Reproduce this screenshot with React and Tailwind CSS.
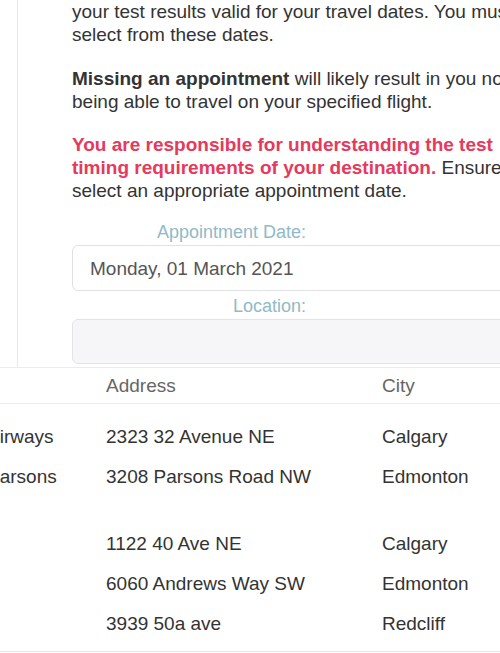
const rows = [
  { name: "Airways", address: "2323 32 Avenue NE", city: "Calgary" },
  { name: "Parsons", address: "3208 Parsons Road NW", city: "Edmonton" },
  null,
  { name: "", address: "1122 40 Ave NE", city: "Calgary" },
  { name: "", address: "6060 Andrews Way SW", city: "Edmonton" },
  { name: "", address: "3939 50a ave", city: "Redcliff" },
];

const Line = ({ children }) => (
  <div className="whitespace-nowrap">{children}</div>
);

const App = () => {
  return (
    <div className="w-[500px] h-[653px] overflow-hidden bg-white font-['Liberation_Sans',Arial,sans-serif] text-[#333]">
      <div className="ml-[17px] w-[600px] h-[367px] border-l border-[#e8e8e8] pl-[54px] text-[19px] leading-[23px]">
        <div>
          <Line>your test results valid for your travel dates. You must</Line>
          <Line>select from these dates.</Line>
        </div>
        <div className="mt-[21px]">
          <Line>
            <span className="font-bold">Missing an appointment</span> will
            likely result in you not
          </Line>
          <Line>being able to travel on your specified flight.</Line>
        </div>
        <div className="mt-[20px]">
          <Line>
            <span className="font-bold text-[#e6395c]">
              You are responsible for understanding the test
            </span>
          </Line>
          <Line>
            <span className="font-bold text-[#e6395c]">
              timing requirements of your destination.
            </span>{" "}
            Ensure you
          </Line>
          <Line>select an appropriate appointment date.</Line>
        </div>

        <div className="mt-[19px] pl-[85px] text-[18px] leading-[22px] text-[#8fbac6]">
          Appointment Date:
        </div>
        <div className="mt-[2px] h-[46px] w-[520px] rounded-md border border-[#e2e2e2] bg-white pl-[17px] flex items-center text-[#555]">
          Monday, 01 March 2021
        </div>
        <div className="mt-[4px] pl-[161px] text-[18px] leading-[22px] text-[#8fbac6]">
          Location:
        </div>
        <div className="mt-[2px] h-[45px] w-[520px] rounded-md border border-[#e3e3e6] bg-[#f6f6f8]" />
      </div>

      <div className="border-t border-[#ececec] bg-white text-[19px] leading-[23px]">
        <div className="grid grid-cols-[106px_276px_1fr] h-[36px] items-center border-b border-[#ededed] text-[#666]">
          <div />
          <div>Address</div>
          <div>City</div>
        </div>
        <div className="pt-[12px]">
          {rows.map((r, i) =>
            r ? (
              <div
                key={i}
                className="grid grid-cols-[106px_276px_1fr] h-[40px] items-center"
              >
                <div className="overflow-hidden whitespace-nowrap">
                  <span className="ml-[-13px]">{r.name}</span>
                </div>
                <div className="whitespace-nowrap">{r.address}</div>
                <div className="whitespace-nowrap">{r.city}</div>
              </div>
            ) : (
              <div key={i} className="h-[27px]" />
            )
          )}
        </div>
        <div className="mt-[8px] border-t border-[#e6e6e6]" />
      </div>
    </div>
  );
};

export default App;
